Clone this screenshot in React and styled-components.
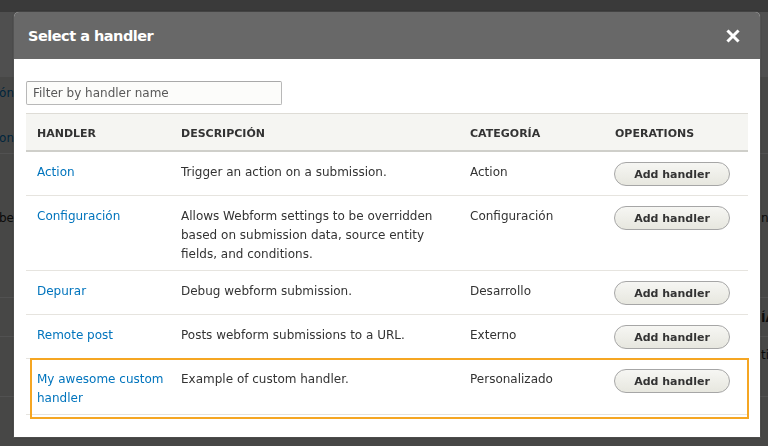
import React from "react";
import styled, { createGlobalStyle } from "styled-components";

const GlobalStyle = createGlobalStyle`
  html, body {
    margin: 0;
    height: 100%;
    overflow: hidden;
  }
  body {
    font-family: "DejaVu Sans", Verdana, sans-serif;
    font-size: 12px;
    color: #333;
    background: #dcdcd8;
  }
`;

// page behind the modal
const Page = styled.div`
  display: flex;
  flex-direction: column;
  height: 446px;
  background: #dcdcd8;
`;

const PageToolbar = styled.div`
  height: 12px;
  background: #b4b4b4;
`;

const PageHeader = styled.div`
  height: 65px;
  background: #f4f4f4;
`;

const PageRow = styled.div`
  display: grid;
  grid-template-columns: 14px 746px 8px;
  height: ${(p) => p.h}px;
  border-bottom: 1px solid ${(p) => (p.line ? "#fbfbfb" : "transparent")};
  box-sizing: border-box;
  line-height: 16px;
`;

const PageLeft = styled.div`
  display: flex;
  justify-content: flex-end;
  white-space: nowrap;
  padding-top: ${(p) => p.top}px;
  color: ${(p) => (p.link ? "#0074bd" : "#222")};
`;

const PageRight = styled.div`
  grid-column: 3;
  white-space: nowrap;
  overflow: hidden;
  padding-top: ${(p) => p.top}px;
  padding-left: 1px;
  font-weight: ${(p) => (p.bold ? 700 : 400)};
  color: #222;
`;

const Overlay = styled.div`
  position: fixed;
  inset: 0;
  background: rgba(0, 0, 0, 0.68);
`;

// modal
const Dialog = styled.div`
  position: fixed;
  left: 14px;
  top: 12px;
  width: 746px;
  height: 425px;
  display: flex;
  flex-direction: column;
  background: #fff;
  border-radius: 5px 5px 0 0;
  box-shadow: 0 0 0 1px rgba(255, 255, 255, 0.08), 0 0 3px rgba(0, 0, 0, 0.4);
`;

const TitleBar = styled.div`
  height: 47px;
  display: flex;
  align-items: center;
  justify-content: space-between;
  padding: 0 20px 0 14px;
  background: #686868;
  border-radius: 5px 5px 0 0;
`;

const Title = styled.h1`
  margin: 0;
  font-size: 14.5px;
  font-weight: 700;
  letter-spacing: -0.5px;
  color: #fff;
`;

const CloseButton = styled.button`
  display: flex;
  padding: 0;
  border: 0;
  background: none;
  cursor: pointer;
  margin-top: 1px;
`;

const Body = styled.div`
  display: flex;
  flex-direction: column;
  gap: 8px;
  padding: 22px 12px;
`;

const FilterInput = styled.input`
  box-sizing: border-box;
  width: 256px;
  height: 24px;
  padding: 3px 6px;
  border: 1px solid #b8b8b8;
  border-top-color: #a9a9a9;
  border-radius: 2px;
  background: #fcfcfa;
  font-family: inherit;
  font-size: 12px;
  color: #333;
  &::placeholder {
    color: #595959;
  }
`;

const Table = styled.div`
  display: flex;
  flex-direction: column;
`;

const Cols = styled.div`
  display: grid;
  grid-template-columns: 144px 289px 145px 1fr;
`;

const HeadRow = styled(Cols)`
  background: #f5f5f2;
  border-top: 1px solid #dedcd6;
  border-bottom: 2px solid #cfcfca;
`;

const HeadCell = styled.div`
  padding: 12px 11px 8px;
  line-height: 16px;
  font-size: 11px;
  font-weight: 700;
  text-transform: uppercase;
  color: #333;
`;

const Row = styled(Cols)`
  position: relative;
  border-bottom: 1px solid #e6e4df;

  ${(p) =>
    p.highlight &&
    `
    &::after {
      content: "";
      position: absolute;
      top: -1px;
      left: 4px;
      right: -1px;
      bottom: -5px;
      border: 2px solid #f5a623;
      pointer-events: none;
    }
  `}
`;

const Cell = styled.div`
  padding: 11px ${(p) => (p.tight ? 4 : 11)}px 6px 11px;
  line-height: 19px;
  color: #333;
`;

const ActionCell = styled.div`
  padding: 10px 0 9px 10px;
`;

const Link = styled.a`
  color: #0074bd;
  text-decoration: none;
`;

const AddButton = styled.button`
  box-sizing: border-box;
  width: 116px;
  height: 24px;
  padding: 0;
  border: 1px solid #a6a6a6;
  border-radius: 20em;
  background: linear-gradient(to bottom, #f6f6f3, #e7e7df);
  font-family: inherit;
  font-size: 11px;
  font-weight: 700;
  color: #333;
  cursor: pointer;
`;

const handlers = [
  { name: "Action", desc: "Trigger an action on a submission.", cat: "Action" },
  {
    name: "Configuración",
    desc: "Allows Webform settings to be overridden based on submission data, source entity fields, and conditions.",
    cat: "Configuración",
  },
  { name: "Depurar", desc: "Debug webform submission.", cat: "Desarrollo" },
  { name: "Remote post", desc: "Posts webform submissions to a URL.", cat: "Externo" },
  {
    name: "My awesome custom handler",
    desc: "Example of custom handler.",
    cat: "Personalizado",
    highlight: true,
  },
];

function CloseIcon() {
  return (
    <svg width="14" height="14" viewBox="0 0 14 14">
      <path d="M2.5 2.5 L11.5 11.5 M11.5 2.5 L2.5 11.5" stroke="#fff" strokeWidth="3" strokeLinecap="square" />
    </svg>
  );
}

export default function App() {
  return (
    <>
      <GlobalStyle />
      <Page>
        <PageToolbar />
        <PageHeader />
        <PageRow h={38}>
          <PageLeft top={8} link>
            Descripción
          </PageLeft>
        </PageRow>
        <PageRow h={39} line>
          <PageLeft top={15} link>
            Operacion
          </PageLeft>
        </PageRow>
        <PageRow h={144} line>
          <PageLeft top={56}>Describe</PageLeft>
          <PageRight top={56}>ning</PageRight>
        </PageRow>
        <PageRow h={39} line>
          <PageRight top={12} bold>
            ÍA
          </PageRight>
        </PageRow>
        <PageRow h={60} line>
          <PageRight top={10}>tion</PageRight>
        </PageRow>
      </Page>
      <Overlay />
      <Dialog role="dialog">
        <TitleBar>
          <Title>Select a handler</Title>
          <CloseButton aria-label="Close">
            <CloseIcon />
          </CloseButton>
        </TitleBar>
        <Body>
          <FilterInput placeholder="Filter by handler name" />
          <Table>
            <HeadRow>
              <HeadCell>Handler</HeadCell>
              <HeadCell>Descripción</HeadCell>
              <HeadCell>Categoría</HeadCell>
              <HeadCell>Operations</HeadCell>
            </HeadRow>
            {handlers.map((h) => (
              <Row key={h.name} highlight={h.highlight}>
                <Cell tight>
                  <Link href="#">{h.name}</Link>
                </Cell>
                <Cell>{h.desc}</Cell>
                <Cell>{h.cat}</Cell>
                <ActionCell>
                  <AddButton>Add handler</AddButton>
                </ActionCell>
              </Row>
            ))}
          </Table>
        </Body>
      </Dialog>
    </>
  );
}
